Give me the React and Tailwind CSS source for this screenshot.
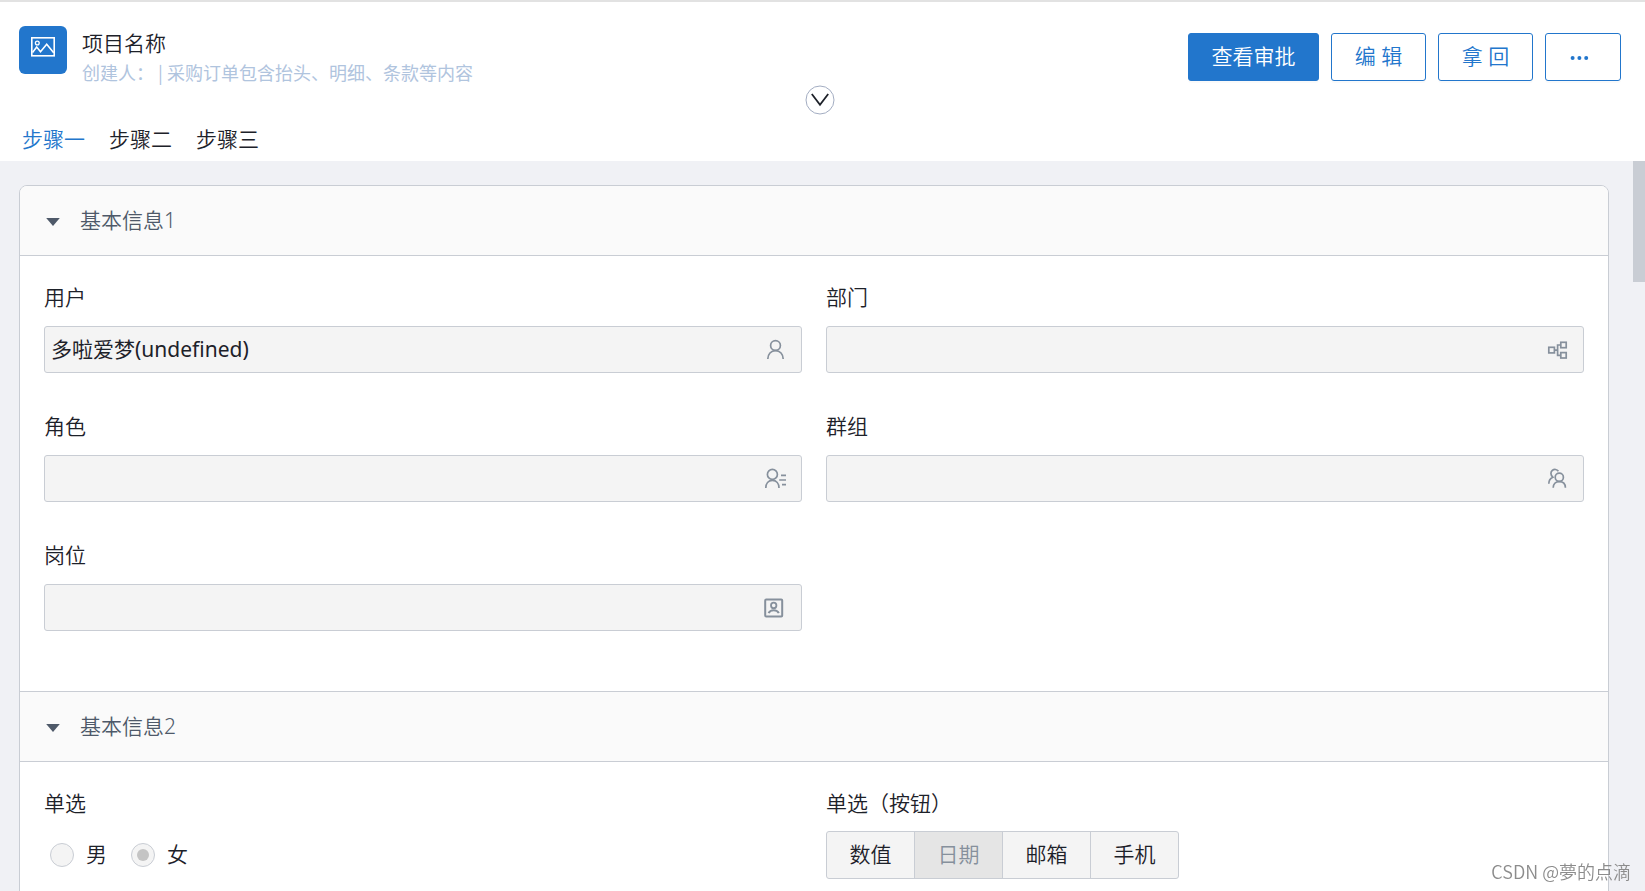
import { useState } from 'react'

const ICONS = {
  user: (
    <>
      <circle cx="11.5" cy="6.5" r="4.9" />
      <path d="M3.8 20c0-4.8 3.2-8.4 7.7-8.4s7.7 3.6 7.7 8.4" />
    </>
  ),
  dept: (
    <>
      <rect x="2.8" y="8.3" width="5.6" height="5.6" />
      <rect x="14.8" y="3.3" width="5.4" height="5.4" />
      <rect x="14.8" y="13.6" width="5.4" height="5.4" />
      <path d="M8.4 11.1h3.2M14.8 6h-3.2v10.3h3.2" />
    </>
  ),
  role: (
    <>
      <circle cx="8.4" cy="6.4" r="5" />
      <path d="M1.8 20c0-4.6 2.6-7.6 6.6-7.6S15 15.4 15 20M17 7.3h5M15.2 12h6.8M18 16.6h4" />
    </>
  ),
  group: (
    <>
      <circle cx="13.3" cy="9.3" r="4.1" />
      <path d="M7.2 19.8c0-3.8 2.2-6.2 6.1-6.2s6.1 2.4 6.1 6.2" />
      <path d="M12.4 3.2C11 1.2 8.2 1 6.5 2.2 4.4 3.8 4.3 6.7 6.8 9.2 4.2 10.3 2.8 12.6 2.8 15.8" />
    </>
  ),
  post: (
    <>
      <rect x="1.2" y="2.5" width="17" height="17" rx="1" strokeWidth="2" />
      <circle cx="9.7" cy="8.4" r="2.7" strokeWidth="1.8" />
      <path d="M4.6 16.2c1-2.2 2.8-3 5.1-3s4.1.8 5.1 3" strokeWidth="2" />
    </>
  ),
}

const FIELDS = [
  { id: 'user', label: '用户', value: '多啦爱梦(undefined)' },
  { id: 'dept', label: '部门', value: '' },
  { id: 'role', label: '角色', value: '' },
  { id: 'group', label: '群组', value: '' },
  { id: 'post', label: '岗位', value: '' },
]

const STEPS = ['步骤一', '步骤二', '步骤三']
const TYPES = ['数值', '日期', '邮箱', '手机']

const Field = ({ id, label, value }) => (
  <div>
    <label htmlFor={id} className="block leading-8">{label}</label>
    <div className="mt-[13px] flex h-[47px] items-center rounded-[3px] border border-[#c9cdd4] bg-[#f4f4f4] pr-[15px] pl-1.5">
      <input id={id} value={value} readOnly className="min-w-0 flex-1 bg-transparent font-normal outline-none" />
      <svg viewBox="0 0 22 22" className="size-[22px] shrink-0" fill="none" stroke="#86909c" strokeWidth="1.7">
        {ICONS[id]}
      </svg>
    </div>
  </div>
)

const Section = ({ title, className = '', children }) => {
  const [open, setOpen] = useState(true)

  return (
    <section className={className}>
      <button
        type="button"
        aria-expanded={open}
        onClick={() => setOpen(!open)}
        className="flex h-[70px] w-full items-center gap-[18px] border-b border-[#c9cdd4] bg-[#fafafa] px-6 text-left text-[#4e5969]"
      >
        <svg viewBox="0 0 18 18" className={`size-[18px] ${open ? '' : '-rotate-90'}`} fill="#4e5969">
          <path d="M2.2 6h13.6L9 14z" />
        </svg>
        {title}
      </button>
      {open && children}
    </section>
  )
}

const ActionButton = ({ primary, className = 'w-[95px]', children }) => (
  <button
    type="button"
    className={`h-12 rounded-[3px] border border-[#2276cc] shadow-[0_2px_0_rgba(0,0,0,0.02)] ${
      primary ? 'bg-[#2276cc] text-white' : 'bg-white text-[#2276cc]'
    } ${className}`}
  >
    {children}
  </button>
)

const App = () => {
  const [step, setStep] = useState(0)
  const [sex, setSex] = useState('女')
  const [type, setType] = useState('日期')

  return (
    <div className="flex h-screen flex-col overflow-hidden bg-[#f0f1f5] font-['Noto_Sans','Noto_Sans_CJK_SC',sans-serif] text-[21px] font-[350] text-[#1d2129]">
      <header className="flex flex-col border-t-2 border-[#e2e2e2] bg-white pt-6 pr-6 pb-1.5 pl-[19px]">
        <div className="flex items-start">
          <div className="flex size-12 shrink-0 justify-center rounded-md bg-[#2276cc] pt-[9px]">
            <svg viewBox="0 0 24 24" className="size-6" fill="none" stroke="#fff" strokeWidth="1.6">
              <rect x="0.8" y="2.8" width="22.4" height="18" />
              <circle cx="6.3" cy="8" r="1.9" strokeWidth="1.3" />
              <path d="M1.5 17.5l4.2-5.4 3.8 4.6 6.2-7.4 7 8.4" />
            </svg>
          </div>
          <div className="mt-px ml-[15px] min-w-0 flex-1">
            <h1 className="leading-8">项目名称</h1>
            <p className="font-['Noto_Sans_CJK_SC',sans-serif] text-lg leading-[26px] font-normal text-[#b0c4de]">
              创建人： | 采购订单包含抬头、明细、条款等内容
            </p>
          </div>
          <div className="mt-[7px] flex gap-3">
            <ActionButton primary className="w-[131px]">查看审批</ActionButton>
            <ActionButton>编 辑</ActionButton>
            <ActionButton>拿 回</ActionButton>
            <ActionButton className="w-[76px]">
              <svg viewBox="0 0 26 20" className="mx-auto h-5 w-[26px]" fill="#2276cc" aria-label="更多">
                <circle cx="2.6" cy="11" r="2" />
                <circle cx="9.4" cy="11" r="2" />
                <circle cx="16.2" cy="11" r="2" />
              </svg>
            </ActionButton>
          </div>
        </div>
        <button type="button" aria-label="收起" className="self-center">
          <svg viewBox="0 0 30 30" className="size-[30px]" fill="none">
            <circle cx="15" cy="15" r="14" stroke="#a3adc2" />
            <path d="M6.8 9L15 19.8 23.2 9" stroke="#1d2129" strokeWidth="1.8" />
          </svg>
        </button>
        <nav className="mt-2 flex gap-6 px-[3px]">
          {STEPS.map((name, i) => (
            <button
              key={name}
              type="button"
              onClick={() => setStep(i)}
              className={`leading-8 ${i === step ? 'text-[#2276cc]' : ''}`}
            >
              {name}
            </button>
          ))}
        </nav>
      </header>

      <div className="flex min-h-0 flex-1">
        <main className="min-w-0 flex-1 overflow-hidden pt-6 pr-6 pl-[19px]">
          <div className="overflow-hidden rounded-lg border border-[#c9cdd4] bg-white">
            <Section title="基本信息1">
              <div className="grid grid-cols-2 gap-x-6 gap-y-[37px] px-6 pt-[25px] pb-[60px]">
                {FIELDS.map((field) => (
                  <Field key={field.id} {...field} />
                ))}
              </div>
            </Section>

            <Section title="基本信息2" className="border-t border-[#c9cdd4]">
              <div className="grid grid-cols-2 gap-x-6 px-6 pt-[25px] pb-[60px]">
                <fieldset>
                  <legend className="leading-8">单选</legend>
                  <div className="mt-3 flex h-12 items-center gap-6 pl-1.5">
                    {['男', '女'].map((name) => (
                      <label key={name} className="flex items-center gap-3">
                        <input
                          type="radio"
                          name="sex"
                          checked={sex === name}
                          onChange={() => setSex(name)}
                          className="size-6 appearance-none rounded-full border border-[#c9cdd4] bg-[#f4f4f4] p-[5px] before:block before:size-3 before:rounded-full checked:before:bg-[#c4c4c4]"
                        />
                        {name}
                      </label>
                    ))}
                  </div>
                </fieldset>
                <fieldset>
                  <legend className="leading-8">单选（按钮）</legend>
                  <div className="mt-3 flex h-12 w-fit overflow-hidden rounded-[3px] border border-[#c9cdd4] bg-[#f4f4f4]">
                    {TYPES.map((name) => (
                      <label
                        key={name}
                        className="relative flex w-[88px] items-center justify-center border-l border-[#c9cdd4] first:w-[87px] first:border-l-0 has-checked:bg-[#e5e5e5] has-checked:text-[#86909c]"
                      >
                        <input
                          type="radio"
                          name="type"
                          checked={type === name}
                          onChange={() => setType(name)}
                          className="absolute inset-0 appearance-none"
                        />
                        {name}
                      </label>
                    ))}
                  </div>
                </fieldset>
              </div>
            </Section>
          </div>
        </main>
        <div className="w-3 shrink-0">
          <div className="h-[121px] bg-[#c9cdd4]" />
        </div>
      </div>

      <span className="pointer-events-none fixed right-3.5 bottom-1.5 font-['Noto_Sans_CJK_SC',sans-serif] text-lg leading-7 text-[#8c8c8c]">
        CSDN @夢的点滴
      </span>
    </div>
  )
}

export default App
